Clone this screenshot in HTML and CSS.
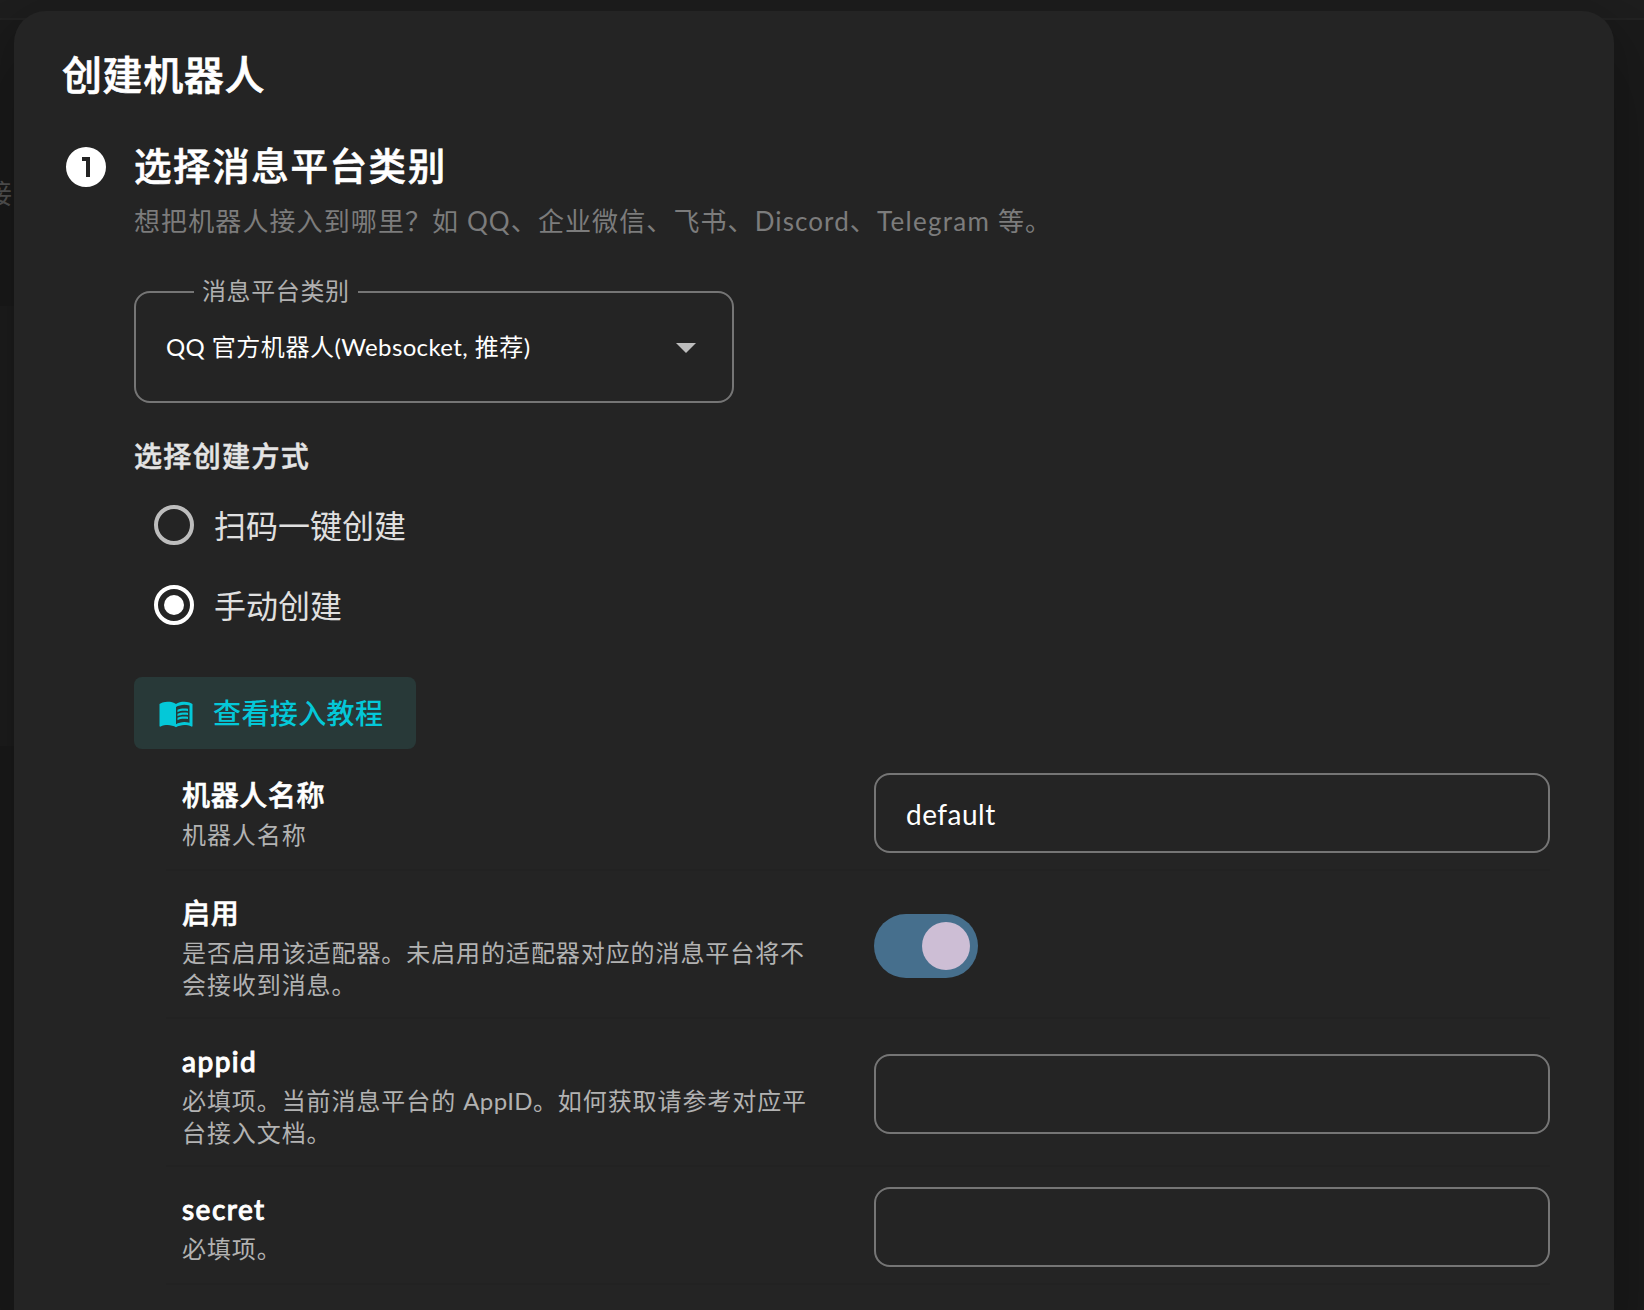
FILE: index.html
```html
<!DOCTYPE html>
<html lang="zh-CN">
<head>
<meta charset="utf-8">
<title>创建机器人</title>
<link rel="stylesheet" href="styles.css">
</head>
<body>
<div class="page">
  <header class="page-bar"></header>
  <div class="page-hint"><span>接</span></div>
  <div class="page-card"></div>
</div>

<main class="dialog">
  <h1 class="dialog-title">创建机器人</h1>
  <section class="step">
    <div class="step-icon"><svg viewBox="0 0 24 24"><path fill-rule="evenodd" d="M10 7V9H12V17H14V7H10M12 2A10 10 0 0 1 22 12A10 10 0 0 1 12 22A10 10 0 0 1 2 12A10 10 0 0 1 12 2Z"/></svg></div>
    <div class="step-body">
      <h2 class="step-title">选择消息平台类别</h2>
      <p class="step-desc">想把机器人接入到哪里？如 QQ、企业微信、飞书、Discord、<span class="en-telegram">Telegram</span> 等。</p>

      <div class="select">
        <span class="select-label">消息平台类别</span>
        <span class="select-value"><span class="en-qq">QQ</span> 官方机器人<span class="en-ws">(Websocket,</span> 推荐)</span>
        <svg class="select-arrow" viewBox="0 0 24 24"><path d="M7 10L12 15L17 10H7Z"/></svg>
      </div>

      <h3 class="mode-title">选择创建方式</h3>
      <div class="radio"><span class="radio-dot"></span><span class="radio-label">扫码一键创建</span></div>
      <div class="radio"><span class="radio-dot checked"></span><span class="radio-label">手动创建</span></div>

      <button class="tutorial">
        <svg viewBox="0 0 24 24"><path d="M12 21.5C10.65 20.65 8.2 20 6.5 20C4.85 20 3.15 20.3 1.75 21.05C1.65 21.1 1.6 21.1 1.5 21.1C1.25 21.1 1 20.85 1 20.6V6C1.6 5.55 2.25 5.25 3 5C4.11 4.65 5.33 4.5 6.5 4.5C8.45 4.5 10.55 4.9 12 6C13.45 4.9 15.55 4.5 17.5 4.5C18.67 4.5 19.89 4.65 21 5C21.75 5.25 22.4 5.55 23 6V20.6C23 20.85 22.75 21.1 22.5 21.1C22.4 21.1 22.35 21.1 22.25 21.05C20.85 20.3 19.15 20 17.5 20C15.8 20 13.35 20.65 12 21.5M12 8V19.5C13.35 18.65 15.8 18 17.5 18C18.7 18 19.9 18.15 21 18.5V7C19.9 6.65 18.7 6.5 17.5 6.5C15.8 6.5 13.35 7.15 12 8M13 11.5C14.11 10.82 15.6 10.5 17.5 10.5C18.41 10.5 19.26 10.59 20 10.78V9.23C19.13 9.08 18.29 9 17.5 9C15.73 9 14.23 9.28 13 9.84V11.5M17.5 11.67C15.79 11.67 14.29 11.93 13 12.46V14.15C14.11 13.5 15.6 13.16 17.5 13.16C18.54 13.16 19.38 13.24 20 13.4V11.9C19.13 11.74 18.29 11.67 17.5 11.67M20 14.57C19.13 14.41 18.29 14.33 17.5 14.33C15.67 14.33 14.17 14.6 13 15.13V16.82C14.16 16.16 15.66 15.84 17.5 15.84C18.54 15.84 19.38 15.91 20 16.07V14.57Z"/></svg>
        查看接入教程
      </button>

      <div class="config">
        <div class="row">
          <div class="row-text"><div class="row-name">机器人名称</div><div class="row-desc">机器人名称</div></div>
          <div class="field"><span class="field-value">default</span></div>
        </div>
        <div class="row tall">
          <div class="row-text"><div class="row-name">启用</div><div class="row-desc">是否启用该适配器。未启用的适配器对应的消息平台将不会接收到消息。</div></div>
          <div class="switch"><span class="switch-thumb"></span></div>
        </div>
        <div class="row tall">
          <div class="row-text"><div class="row-name en">appid</div><div class="row-desc">必填项。当前消息平台的 <span class="en-app">AppID</span>。如何获取请参考对应平台接入文档。</div></div>
          <div class="field"></div>
        </div>
        <div class="row">
          <div class="row-text"><div class="row-name en">secret</div><div class="row-desc">必填项。</div></div>
          <div class="field"></div>
        </div>
      </div>
    </div>
  </section>
</main>
</body>
</html>
```
FILE: styles.css
```css
* { box-sizing: border-box; margin: 0; padding: 0; }

html { overflow: hidden; background: #1b1b1b; }

body {
  position: relative;
  width: 1644px;
  height: 1310px;
  overflow: hidden;
  background: #1b1b1b;
  color: #fff;
  font-family: Lato, "Noto Sans CJK SC", sans-serif;
}

.page { height: 1310px; overflow: hidden; }
.page-bar { height: 20px; background: #1e1e1e; border-bottom: 2px solid #232323; }
.page-hint { height: 286px; padding-top: 154px; color: #555; font-size: 27px; line-height: 40px; }
.page-hint span { margin-left: -15px; }
.page-card { width: 800px; height: 440px; background: #1e1e1e; }

.dialog {
  position: absolute;
  top: 11px;
  left: 14px;
  width: 1600px;
  height: 1299px;
  padding: 35px 64px 0 48px;
  border-radius: 32px 32px 0 0;
  background: #242424;
  box-shadow: 0 22px 30px -14px rgba(0, 0, 0, .2), 0 48px 76px 6px rgba(0, 0, 0, .14), 0 18px 92px 16px rgba(0, 0, 0, .12);
}

.dialog-title { font-size: 40px; line-height: 58px; font-weight: 500; letter-spacing: .6px; -webkit-text-stroke: .7px currentColor; }

.step { display: grid; grid-template-columns: 72px 1fr; margin-top: 43px; }
.step-icon svg { display: block; width: 48px; height: 48px; margin-top: -4px; fill: #fff; }
.step-title { margin-top: -1px; font-size: 37.5px; line-height: 40px; font-weight: 500; letter-spacing: 1.6px; -webkit-text-stroke: .6px currentColor; }
.step-desc { margin-top: 17px; font-size: 26px; line-height: 36px; letter-spacing: 1.1px; color: #7c7c7c; white-space: nowrap; }
.en-telegram { letter-spacing: 1.3px; }

.select {
  position: relative;
  display: flex;
  align-items: center;
  justify-content: space-between;
  width: 600px;
  height: 112px;
  margin-top: 52px;
  padding: 0 22px 0 30px;
  border: 2px solid #757575;
  border-radius: 16px;
}
.select-label {
  position: absolute;
  top: -22px;
  left: 58px;
  width: 164px;
  padding-left: 8px;
  background: #242424;
  color: #b0b0b0;
  font-size: 24px;
  line-height: 40px;
  letter-spacing: .6px;
}
.select-value { font-size: 24px; line-height: 36px; letter-spacing: .55px; white-space: nowrap; }
.en-qq { letter-spacing: .3px; }
.en-ws { letter-spacing: .35px; }
.select-arrow { width: 48px; height: 48px; fill: #bdbdbd; }

.mode-title { margin: 33px 0 9px; font-size: 28px; line-height: 40px; font-weight: 500; letter-spacing: 1.35px; color: #e4e4e4; -webkit-text-stroke: .5px currentColor; }
.radio { display: flex; align-items: center; gap: 20px; height: 80px; padding-left: 20px; font-size: 32px; color: #e0e0e0; }
.radio-label { padding-bottom: 3px; }
.radio-dot { display: grid; place-items: center; width: 40px; height: 40px; border: 4px solid #bdbdbd; border-radius: 50%; }
.radio-dot.checked { border-color: #fff; }
.radio-dot.checked::before { content: ""; width: 20px; height: 20px; border-radius: 50%; background: #fff; }

.tutorial {
  display: flex;
  align-items: center;
  gap: 19px;
  width: 282px;
  height: 72px;
  margin-top: 32px;
  padding-left: 24px;
  border: 0;
  border-radius: 8px;
  background: #283938;
  color: #04c8d8;
  font: 500 28px/40px Lato, "Noto Sans CJK SC", sans-serif;
  letter-spacing: .4px;
}
.tutorial svg { width: 36px; height: 36px; fill: currentColor; }

.config { margin: 4px 0 0 32px; }
.row {
  display: grid;
  grid-template-columns: 708px 676px;
  height: 118px;
  padding-top: 4px;
  align-items: center;
  border-bottom: 2px solid #222;
}
.row.tall { height: 148px; }
.row-text { align-self: start; padding: 18px 56px 0 16px; }
.row-name { font-size: 28px; line-height: 40px; font-weight: 500; letter-spacing: .65px; -webkit-text-stroke: .6px currentColor; }
.row-name.en { letter-spacing: 1.45px; -webkit-text-stroke-width: .9px; }
.row-desc { margin-top: 4px; font-size: 24px; line-height: 32px; letter-spacing: .92px; color: #b2b2b2; }
.en-app { letter-spacing: .4px; }

.field { display: flex; align-items: center; height: 80px; padding: 2px 0 0 30px; border: 2px solid #757575; border-radius: 16px; }
.field-value { font-size: 28px; letter-spacing: .5px; }

.switch { display: flex; align-items: center; justify-content: flex-end; width: 104px; height: 64px; padding: 8px; border-radius: 32px; background: #466f8d; }
.switch-thumb { width: 48px; height: 48px; border-radius: 50%; background: #cdbed5; }
```
